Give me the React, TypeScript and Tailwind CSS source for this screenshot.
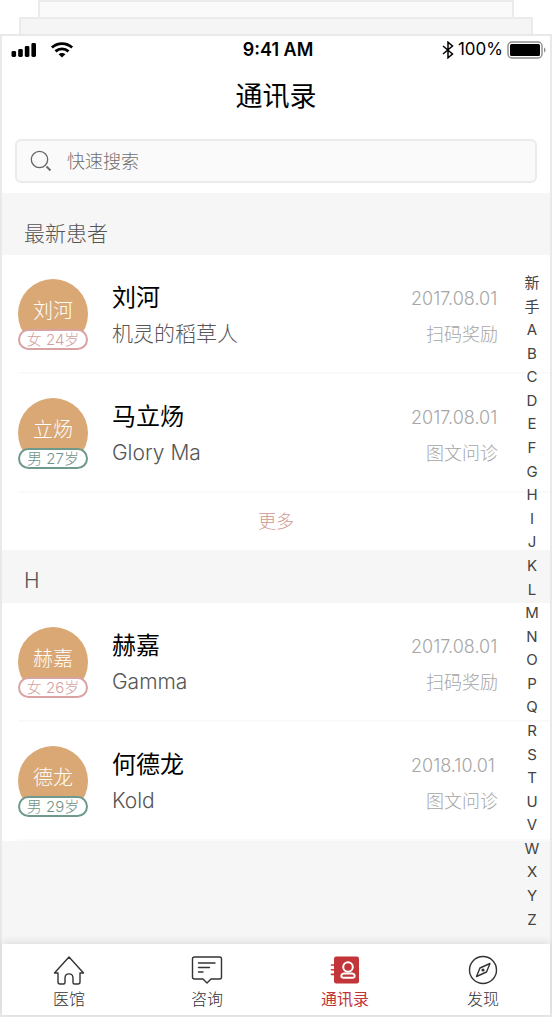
import type { ReactNode } from 'react'

type Patient = {
  name: string
  short: string
  nick: string
  gender: '男' | '女'
  age: number
  date: string
  tag: string
}

const recentPatients: Patient[] = [
  { name: '刘河', short: '刘河', nick: '机灵的稻草人', gender: '女', age: 24, date: '2017.08.01', tag: '扫码奖励' },
  { name: '马立炀', short: '立炀', nick: 'Glory Ma', gender: '男', age: 27, date: '2017.08.01', tag: '图文问诊' },
]

const hPatients: Patient[] = [
  { name: '赫嘉', short: '赫嘉', nick: 'Gamma', gender: '女', age: 26, date: '2017.08.01', tag: '扫码奖励' },
  { name: '何德龙', short: '德龙', nick: 'Kold', gender: '男', age: 29, date: '2018.10.01', tag: '图文问诊' },
]

const indexKeys = ['新', '手', ...'ABCDEFGHIJKLMNOPQRSTUVWXYZ']

function StatusBar() {
  return (
    <div className="grid h-7 grid-cols-3 items-center pr-1 pl-2 text-black">
      <div className="flex items-center gap-3">
        <svg width="28" height="16" viewBox="0 0 28 16" fill="currentColor" aria-hidden="true">
          <rect x="1.5" y="9" width="4.6" height="6" rx="1.4" />
          <rect x="8.2" y="7" width="4.6" height="8" rx="1.4" />
          <rect x="14.8" y="4" width="4.6" height="11" rx="1.4" />
          <rect x="21.4" y="1" width="4.6" height="14" rx="1.4" />
        </svg>
        <svg width="24" height="16" viewBox="0 0 21 15" fill="none" stroke="currentColor" strokeWidth="2.6" aria-hidden="true">
          <path d="M1 5.2C6.4.2 14.6.2 20 5.2" />
          <path d="M4.4 8.8c3.5-3.2 8.7-3.2 12.2 0" />
          <path d="M10.5 14.6 7.3 11.5c1.8-1.6 4.6-1.6 6.4 0z" fill="currentColor" stroke="none" />
        </svg>
      </div>
      <p className="text-center text-lg font-semibold">9:41 AM</p>
      <div className="flex items-center justify-end gap-1">
        <svg width="12" height="18" viewBox="0 0 12 18" fill="none" stroke="currentColor" strokeWidth="1.5" aria-hidden="true">
          <path d="m1 5 9.5 8L6 16.8V1.2L10.5 5 1 13" />
        </svg>
        <span className="text-[17px] font-normal">100%</span>
        <svg width="39" height="18" viewBox="0 0 39 18" fill="none" aria-hidden="true">
          <rect x="1" y="1" width="34" height="16" rx="4" stroke="#8c8c8c" strokeWidth="1.4" />
          <rect x="3" y="3" width="30" height="12" rx="1.5" fill="#000" />
          <path d="M37 6.5c2 .8 2 4.2 0 5z" fill="#8c8c8c" />
        </svg>
      </div>
    </div>
  )
}

function PatientRow({ patient }: { patient: Patient }) {
  const female = patient.gender === '女'
  return (
    <li className="group flex h-[119px] pl-4">
      <div className="flex flex-1 border-b-2 border-[#fafafa] pr-[52px]">
        <div className="relative mt-6 h-[71px] w-[70px] shrink-0">
          <div className="flex h-[70px] items-start justify-center rounded-full bg-[#d9a875] pt-4 text-xl leading-8 text-white">
            {patient.short}
          </div>
          <span
            className={`absolute inset-x-0 bottom-0 flex h-[21px] items-center justify-center rounded-full border-2 bg-white pt-0.5 text-[15px] whitespace-pre ${
              female ? 'border-[#d9a3a3] text-[#d39f9f]' : 'border-[#6f9a8b] text-[#6f9488]'
            }`}
          >
            {`${patient.gender} ${patient.age}岁`}
          </span>
        </div>
        <div className="ml-6 flex-1 pt-[27px]">
          <h3 className="text-2xl leading-8 font-normal text-black">{patient.name}</h3>
          <p className="mt-1 text-[21px] leading-8 text-[#555]">{patient.nick}</p>
        </div>
        <div className="w-[87px] pt-7 text-lg leading-8 text-[#a6a6a6]">
          <time className="block">{patient.date}</time>
          <p className="mt-1 text-right">{patient.tag}</p>
        </div>
      </div>
    </li>
  )
}

function TabItem({ label, active, children }: { label: string; active?: boolean; children: ReactNode }) {
  return (
    <a
      href="#"
      aria-current={active ? 'page' : undefined}
      className={`flex flex-col items-center pt-[9px] text-base leading-6 ${active ? 'font-normal text-[#c23538]' : 'text-[#333]'}`}
    >
      <svg width="34" height="34" viewBox="0 0 34 34" fill="none" stroke="currentColor" strokeWidth="1.4" strokeLinejoin="round" strokeLinecap="round" aria-hidden="true">
        {children}
      </svg>
      {label}
    </a>
  )
}

function App() {
  return (
    <div className="flex min-h-screen flex-col bg-white font-['Inter','Noto_Sans_CJK_SC',sans-serif] font-light">
      <div className="mx-[38px] h-[17px] border-2 border-b-0 border-[#ebebeb] bg-[#fafafa]" />
      <div className="mx-[19px] h-[17px] border-2 border-b-0 border-[#ebebeb] bg-[#f5f5f5]" />

      <div className="flex flex-1 flex-col border-2 border-[#e9e9e9] bg-white">
        <header>
          <StatusBar />
          <h1 className="pt-[13px] text-center text-[27px] leading-10 font-normal text-black">通讯录</h1>
          <div className="px-[13px] pt-[22px] pb-[10px]">
            <label className="flex h-11 items-center gap-[15px] rounded-md border-2 border-[#ebebeb] bg-[#fafafa] pl-[13px]">
              <svg width="22" height="22" viewBox="0 0 22 22" fill="none" stroke="#666" strokeWidth="1.3" aria-hidden="true">
                <circle cx="9.5" cy="9.5" r="8.2" />
                <path d="m16.5 16.5 4 4" strokeWidth="1.8" />
              </svg>
              <input
                type="search"
                aria-label="快速搜索"
                placeholder="快速搜索"
                className="min-w-0 flex-1 bg-transparent pt-0.5 text-lg outline-none placeholder:text-[#6f6f6f]"
              />
            </label>
          </div>
        </header>

        <main className="relative flex-1 bg-[#f6f6f6]">
          <section>
            <h2 className="h-[62px] pt-[25px] pl-[22px] text-[21px] leading-8 text-[#555]">最新患者</h2>
            <ul className="bg-white">
              {recentPatients.map((p) => (
                <PatientRow key={p.name} patient={p} />
              ))}
            </ul>
            <button type="button" className="block h-[57px] w-full bg-white text-lg text-[#cf9790]">
              更多
            </button>
          </section>
          <section>
            <h2 className="h-[53px] pt-[15px] pl-[22px] text-[21px] leading-8 text-[#555]">H</h2>
            <ul className="bg-white">
              {hPatients.map((p) => (
                <PatientRow key={p.name} patient={p} />
              ))}
            </ul>
          </section>

          <nav
            aria-label="索引"
            className="absolute top-20 right-2 bottom-[14px] flex w-5 flex-col items-center justify-between text-[15px] leading-5 font-normal text-[#444]"
          >
            {indexKeys.map((key) => (
              <a key={key} href={`#${key}`}>
                {key}
              </a>
            ))}
          </nav>
        </main>

        <footer className="relative bg-white shadow-[0_-2px_8px_rgba(0,0,0,0.1)]">
          <div className="-mx-0.5 grid h-[71px] grid-cols-4">
            <TabItem label="医馆">
              <path d="M17 4 2.5 20H6v9c0 1.3.6 2 2 2h3.500c1 0 1.500-.6 1.500-1.500V25c0-5.500 8-5.500 8 0v4.500c0 .9.5 1.500 1.500 1.500H26c1.400 0 2-.7 2-2v-9h3.500z" />
            </TabItem>
            <TabItem label="咨询">
              <path d="M4.500 4h25c1.200 0 2 .8 2 2v18c0 1.200-.8 2-2 2H21l-4 4-4-4H4.500c-1.200 0-2-.8-2-2V6c0-1.200.8-2 2-2zM8.500 10H25M8.500 14.500h11M8.500 19h4.500" />
            </TabItem>
            <TabItem label="通讯录" active>
              <rect x="6" y="3.500" width="25" height="27" rx="2.200" fill="currentColor" stroke="none" />
              <path d="M3.500 12h5M3.500 16.700h5M3.500 21.400h5" strokeWidth="1.600" />
              <ellipse cx="20" cy="14" rx="4.800" ry="4.800" stroke="#fff" strokeWidth="2" />
              <path d="M16.500 20.500h7c3.800 0 4.300 4.300 1 4.300h-9c-3.300 0-2.800-4.300 1-4.300z" stroke="#fff" strokeWidth="2" />
            </TabItem>
            <TabItem label="发现">
              <circle cx="17" cy="17" r="13.500" />
              <path d="M24 10.500 20.500 19 10.500 23.500 14 15z" />
              <circle cx="17" cy="17" r=".9" fill="currentColor" />
            </TabItem>
          </div>
        </footer>
      </div>
    </div>
  )
}

export default App
